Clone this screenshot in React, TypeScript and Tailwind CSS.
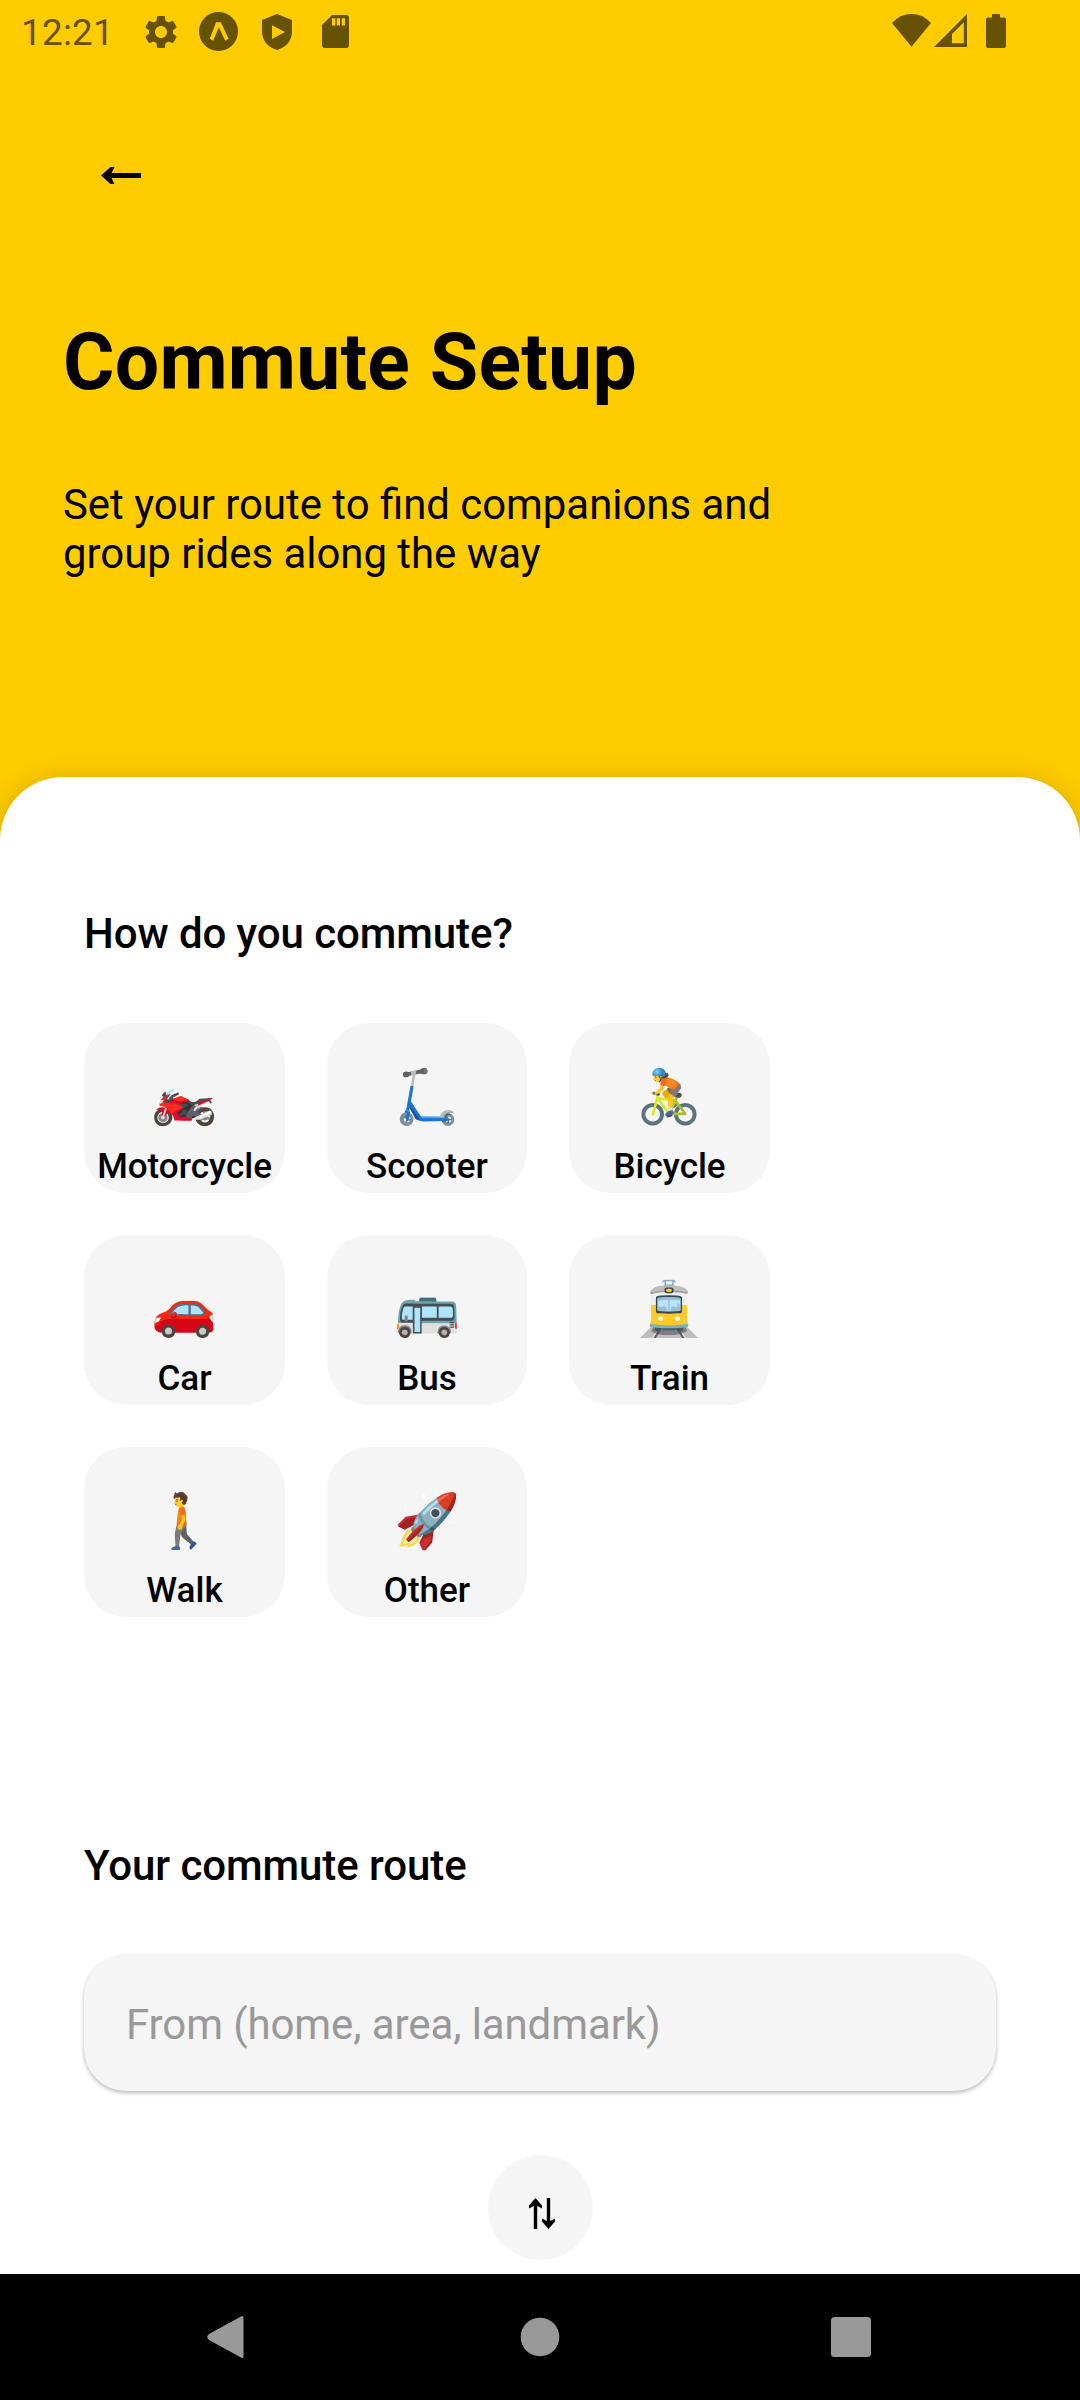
const modes = [
  { emoji: "🏍️", label: "Motorcycle" },
  { emoji: "🛴", label: "Scooter" },
  { emoji: "🚴", label: "Bicycle" },
  { emoji: "🚗", label: "Car" },
  { emoji: "🚌", label: "Bus" },
  { emoji: "🚊", label: "Train" },
  { emoji: "🚶", label: "Walk" },
  { emoji: "🚀", label: "Other" },
];

function StatusBar() {
  return (
    <div className="flex h-[63px] items-start justify-between pl-[21px] text-[#665200]">
      <div className="flex">
        <span className="mt-[11px] w-[120px] text-[36.75px] leading-[44px] tracking-[0.3px]">12:21</span>
        <svg className="mt-[11.5px] size-10" viewBox="0 0 24 24" fill="currentColor">
          <path d="M19.14 12.94c.04-.3.06-.61.06-.94 0-.32-.02-.64-.07-.94l2.03-1.58c.18-.14.23-.41.12-.61l-1.92-3.32c-.12-.22-.37-.29-.59-.22l-2.39.96c-.5-.38-1.03-.7-1.62-.94l-.36-2.54c-.04-.24-.24-.41-.48-.41h-3.84c-.24 0-.43.17-.47.41l-.36 2.54c-.59.24-1.13.57-1.62.94l-2.39-.96c-.22-.08-.47 0-.59.22L2.74 8.87c-.12.21-.08.47.12.61l2.03 1.58c-.05.3-.09.63-.09.94s.02.64.07.94l-2.03 1.58c-.18.14-.23.41-.12.61l1.92 3.32c.12.22.37.29.59.22l2.39-.96c.5.38 1.03.7 1.62.94l.36 2.54c.05.24.24.41.48.41h3.84c.24 0 .44-.17.47-.41l.36-2.54c.59-.24 1.13-.56 1.62-.94l2.39.96c.22.08.47 0 .59-.22l1.92-3.32c.12-.22.07-.47-.12-.61l-2.01-1.58zM12 15.6c-1.98 0-3.6-1.62-3.6-3.6s1.62-3.6 3.6-3.6 3.6 1.62 3.6 3.6-1.62 3.6-3.6 3.6z" />
        </svg>
        <svg className="mt-[12px] ml-[18px] h-[39px] w-[39px]" viewBox="0 0 39 39">
          <circle cx="19.5" cy="19.5" r="19.5" fill="currentColor" />
          <path d="M10.8 26.8 L17.1 10.2 H21.9 L29.6 26.8 L26.2 28.8 L19.8 15.2 L14.2 28.8 Z" fill="#ffcc00" />
        </svg>
        <svg className="mt-[13.5px] ml-[24px] h-[36px] w-[30px]" viewBox="0 0 30 36" fill="currentColor" fillRule="evenodd">
          <path d="M15 0 L30 6 V17.5 C30 26.5 24 33.5 15 36 C6 33.5 0 26.5 0 17.5 V6 Z M10 11.3 V24.9 L23 18.1 Z" />
        </svg>
        <svg className="mt-[15px] ml-[29.5px] h-[33px] w-[27px]" viewBox="0 0 27 33" fill="currentColor" fillRule="evenodd">
          <path d="M10 0 H24 Q27 0 27 3 V30 Q27 33 24 33 H3 Q0 33 0 30 V10 Z M10 3.3 V10.5 H13.3 V3.3 Z M14.8 3.3 V10.5 H18 V3.3 Z M19.7 3.3 V10.5 H23 V3.3 Z" />
        </svg>
      </div>
      <div className="flex pr-[74px]">
        <svg className="mt-[14px] h-[33px] w-[39px]" viewBox="0 0 39 33" fill="currentColor">
          <path d="M0 9 Q8 0 19.5 0 Q31 0 39 9 L19.5 32.7 Z" />
        </svg>
        <svg className="mt-[14px] ml-[3px] h-[33px] w-[33px]" viewBox="0 0 33 33" fill="currentColor" fillRule="evenodd">
          <path d="M33 0 V33 H0 Z M29.8 8.3 L18 20 V29.3 H29.8 Z" />
        </svg>
        <svg className="mt-[14px] ml-[19px] h-[34px] w-[20px]" viewBox="0 0 20 34" fill="currentColor">
          <path d="M6 0 H14 V3.5 H18 Q20 3.5 20 5.5 V32 Q20 34 18 34 H2 Q0 34 0 32 V5.5 Q0 3.5 2 3.5 H6 Z" />
        </svg>
      </div>
    </div>
  );
}

function Header() {
  return (
    <header className="h-[777px] shrink-0">
      <StatusBar />
      <button className="mt-[81px] ml-[63px] flex h-[63px] w-[116px] items-center justify-center" aria-label="Back">
        <svg className="h-[17px] w-[40px]" viewBox="0 0 40 17" fill="#000">
          <path d="M0 8.5 L9.5 0 H13.5 L10.5 6 H40 V11 H10.5 L13.5 17 H9.5 Z" />
        </svg>
      </button>
      <h1 className="mt-[109px] ml-[63px] text-[78.75px] leading-[92px] font-bold tracking-[0.2px]">Commute Setup</h1>
      <p className="mt-[72px] ml-[63px] w-[740px] text-[41.9px] leading-[49px]">
        Set your route to find companions and
        <br />
        group rides along the way
      </p>
    </header>
  );
}

function ModeCard({ emoji, label }: { emoji: string; label: string }) {
  return (
    <button className="flex h-[170px] flex-col items-center rounded-[42px] bg-[#f5f5f5] pt-[44px]">
      <span className="text-[53px] leading-[60px]">{emoji}</span>
      <span className="mt-[20px] text-[35px] leading-[40px] font-medium whitespace-nowrap">{label}</span>
    </button>
  );
}

function NavBar() {
  return (
    <nav className="h-[126px] shrink-0 bg-black">
      <svg className="h-[126px] w-[1080px]" viewBox="0 0 1080 126" fill="#999">
        <path d="M241 42.5 Q243.5 41 243.5 44 V82 Q243.5 85 241 83.5 L209 66 Q205.5 63 209 60 Z" />
        <circle cx="540" cy="63" r="19.3" />
        <rect x="831" y="43" width="40" height="40" rx="3.5" />
      </svg>
    </nav>
  );
}

export default function App() {
  return (
    <div className="flex h-[2400px] w-[1080px] flex-col overflow-hidden bg-[#ffcc00] font-['Roboto','Noto_Color_Emoji',sans-serif] text-black">
      <Header />
      <main className="flex min-h-0 flex-1 flex-col overflow-hidden rounded-t-[63px] bg-white px-[84px] shadow-[0_2px_24px_rgba(0,0,0,0.18)]">
        <h2 className="mt-[132px] text-[42px] leading-[49px] font-medium tracking-[-0.08px]">How do you commute?</h2>
        <div className="mt-[65px] grid grid-cols-[201px_200px_201px] gap-[42px]">
          {modes.map((m) => (
            <ModeCard key={m.label} emoji={m.emoji} label={m.label} />
          ))}
        </div>
        <h2 className="mt-[224px] text-[42px] leading-[49px] font-medium tracking-[-0.08px]">Your commute route</h2>
        <div className="mt-[65px] h-[136px] shrink-0 rounded-[42px] bg-[#f5f5f5] shadow-[0_2px_4px_rgba(0,0,0,0.28)]">
          <input
            className="h-[136px] w-full bg-transparent px-[42px] pt-[3px] text-[42px] tracking-[-0.1px] outline-none placeholder:text-[#999]"
            placeholder="From (home, area, landmark)"
          />
        </div>
        <button className="mt-[64px] flex size-[105px] shrink-0 items-center justify-center self-center rounded-full bg-[#f5f5f5]" aria-label="Swap">
          <svg className="mt-[11px] ml-[3px] h-[31px] w-[26px]" viewBox="0 0 26 31" fill="#000">
            <path d="M6.5 0 L13 7.5 V10.5 L8.2 8 V31 H4.8 V8 L0 10.5 V7.5 Z" />
            <path d="M19.5 31 L13 23.5 V20.5 L17.8 23 V0 H21.2 V23 L26 20.5 V23.5 Z" />
          </svg>
        </button>
      </main>
      <NavBar />
    </div>
  );
}
